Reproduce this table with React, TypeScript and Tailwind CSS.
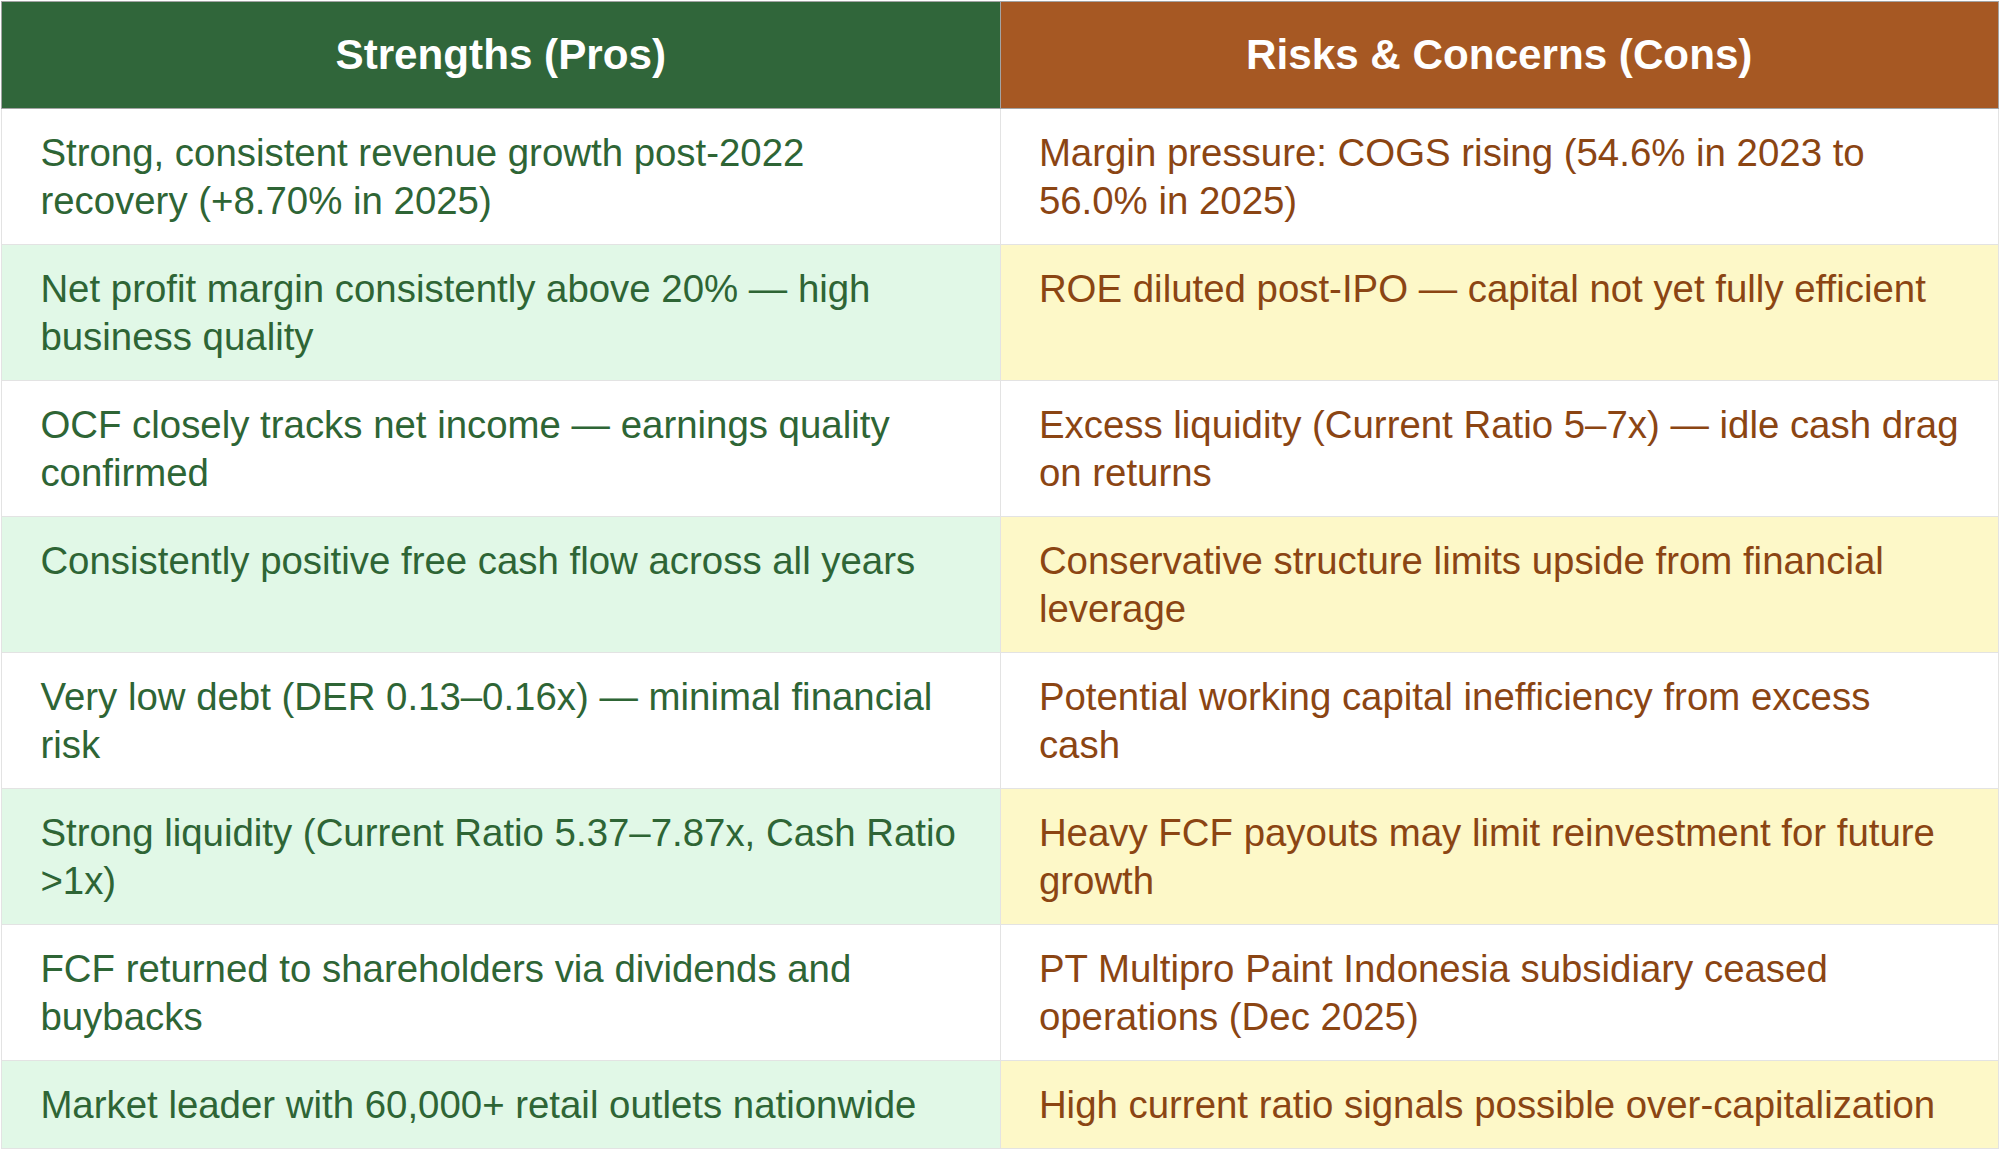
const rows: [string, string][] = [
  [
    'Strong, consistent revenue growth post-2022 recovery (+8.70% in 2025)',
    'Margin pressure: COGS rising (54.6% in 2023 to 56.0% in 2025)',
  ],
  [
    'Net profit margin consistently above 20% — high business quality',
    'ROE diluted post-IPO — capital not yet fully efficient',
  ],
  [
    'OCF closely tracks net income — earnings quality confirmed',
    'Excess liquidity (Current Ratio 5–7x) — idle cash drag on returns',
  ],
  [
    'Consistently positive free cash flow across all years',
    'Conservative structure limits upside from financial leverage',
  ],
  [
    'Very low debt (DER 0.13–0.16x) — minimal financial risk',
    'Potential working capital inefficiency from excess cash',
  ],
  [
    'Strong liquidity (Current Ratio 5.37–7.87x, Cash Ratio >1x)',
    'Heavy FCF payouts may limit reinvestment for future growth',
  ],
  [
    'FCF returned to shareholders via dividends and buybacks',
    'PT Multipro Paint Indonesia subsidiary ceased operations (Dec 2025)',
  ],
  [
    'Market leader with 60,000+ retail outlets nationwide',
    'High current ratio signals possible over-capitalization',
  ],
];

export default function App() {
  return (
    <div className="min-h-screen bg-white pl-[1px] pt-[1px] font-['Liberation_Sans',Arial,sans-serif]">
      <table className="w-[1998px] table-fixed border-collapse">
        <thead>
          <tr>
            <th className="w-1/2 border-[1.6px] border-[#a3a3a3] bg-[#30663a] px-[38px] py-[26.8px] text-center text-[42.2px] leading-[52.8px] font-bold text-white">
              Strengths (Pros)
            </th>
            <th className="w-1/2 border-[1.6px] border-[#a3a3a3] bg-[#a65823] px-[38px] py-[26.8px] text-center text-[42.2px] leading-[52.8px] font-bold text-white">
              Risks &amp; Concerns (Cons)
            </th>
          </tr>
        </thead>
        <tbody>
          {rows.map(([pro, con], i) => (
            <tr key={i}>
              <td
                className={`border-[1.6px] border-[#e3e3e3] px-[38.4px] py-[19.5px] align-top text-[38.4px] leading-[48px] text-[#2e6535] ${
                  i % 2 === 1 ? 'bg-[#e1f8e7]' : 'bg-white'
                }`}
              >
                {pro}
              </td>
              <td
                className={`border-[1.6px] border-[#e3e3e3] px-[38.4px] py-[19.5px] align-top text-[38.4px] leading-[48px] text-[#8b4513] ${
                  i % 2 === 1 ? 'bg-[#fdf8c8]' : 'bg-white'
                }`}
              >
                {con}
              </td>
            </tr>
          ))}
        </tbody>
      </table>
    </div>
  );
}
